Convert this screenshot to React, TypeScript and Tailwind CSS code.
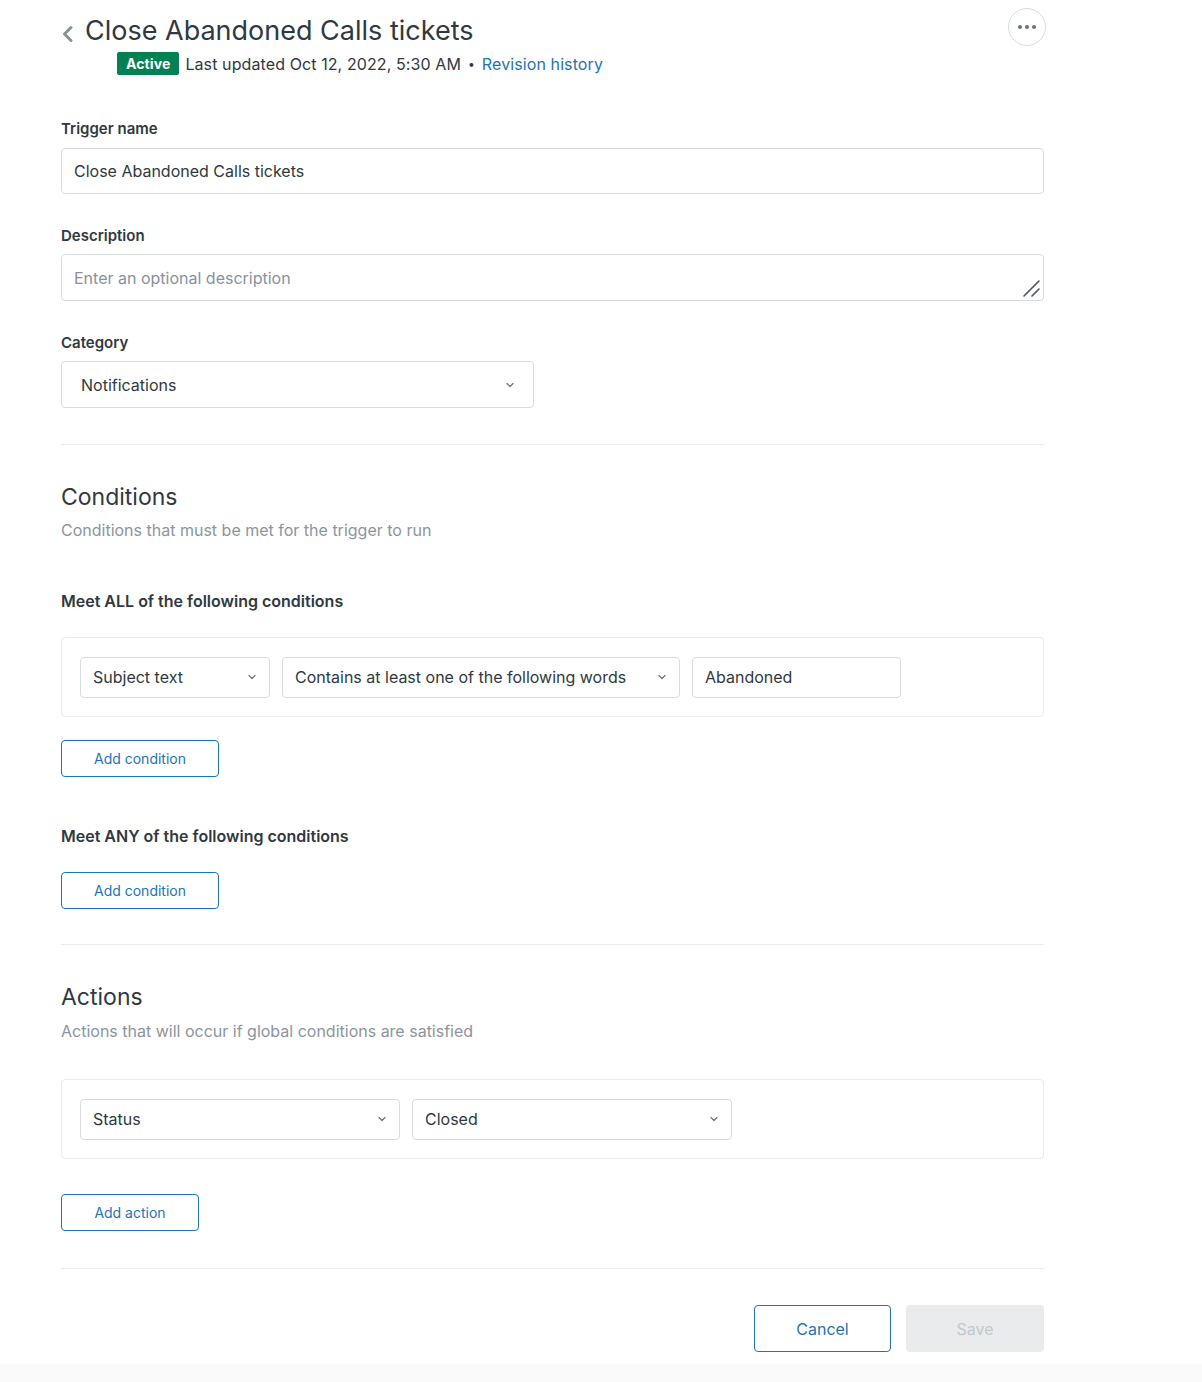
import React from 'react';

const font = { fontFamily: 'Inter, "Noto Sans", Arial, sans-serif' };

const Chevron: React.FC<{ className?: string }> = ({ className = '' }) => (
  <svg viewBox="0 0 12 12" className={`w-[12px] h-[12px] ${className}`} fill="none">
    <path d="M3 4.5 6 7.5 9 4.5" stroke="#68737d" strokeWidth="1.2" strokeLinecap="round" strokeLinejoin="round" />
  </svg>
);

const Select: React.FC<{ value: string; className?: string }> = ({ value, className = '' }) => (
  <div
    className={`h-[41px] flex items-center justify-between pl-[12px] pr-[11px] border border-[#d8dcde] rounded-[4px] bg-white text-[16px] text-[#2f3941] ${className}`}
  >
    <span>{value}</span>
    <Chevron />
  </div>
);

const OutlineButton: React.FC<{ label: string; className?: string }> = ({ label, className = '' }) => (
  <button
    className={`h-[37px] border border-[#1f73b7] rounded-[4px] text-[14px] text-[#1f73b7] bg-white ${className}`}
  >
    {label}
  </button>
);

const Label: React.FC<{ children: React.ReactNode; className?: string }> = ({ children, className = '' }) => (
  <div className={`text-[15px] leading-[20px] font-semibold text-[#2f3941] ${className}`}>{children}</div>
);

export default function App() {
  return (
    <div className="min-h-screen bg-white flex flex-col" style={font}>
      <div className="pl-[61px] w-[1044px] pt-[8px]">
        {/* Header */}
        <div className="flex items-start justify-between">
          <div className="pt-[7px]">
            <div className="flex items-center">
              <svg viewBox="0 0 13 18" className="w-[13px] h-[18px] mt-[5px]" fill="none">
                <path d="M10 2.5 3.5 9l6.5 6.5" stroke="#87929d" strokeWidth="3" strokeLinecap="round" strokeLinejoin="round" />
              </svg>
              <h1 className="ml-[11px] text-[27px] leading-[32px] text-[#2f3941]">
                Close Abandoned Calls tickets
              </h1>
            </div>
            <div className="mt-[5px] pl-[56px] flex items-center h-[23px] text-[16px] tracking-[0.1px] text-[#2f3941]">
              <span className="h-[23px] px-[9px] flex items-center bg-[#038153] text-white text-[14px] font-bold rounded-[2px]">
                Active
              </span>
              <span className="ml-[6px]">Last updated Oct 12, 2022, 5:30 AM</span>
              <span className="mx-[7px] text-[12px]">•</span>
              <span className="text-[#1f73b7]">Revision history</span>
            </div>
          </div>
          <button className="w-[38px] h-[38px] rounded-full border border-[#d8dcde] flex items-center justify-center gap-[3px] mr-[-2px]">
            <span className="w-[4px] h-[4px] rounded-full bg-[#68737d]" />
            <span className="w-[4px] h-[4px] rounded-full bg-[#68737d]" />
            <span className="w-[4px] h-[4px] rounded-full bg-[#68737d]" />
          </button>
        </div>

        {/* Trigger name */}
        <Label className="mt-[44px]">Trigger name</Label>
        <div className="mt-[9px] h-[46px] border border-[#d8dcde] rounded-[4px] flex items-center px-[12px] text-[16px] text-[#2f3941]">
          Close Abandoned Calls tickets
        </div>

        {/* Description */}
        <Label className="mt-[32px]">Description</Label>
        <div className="relative mt-[8px] h-[47px] border border-[#d8dcde] rounded-[4px] flex items-center px-[12px] text-[16px] text-[#87929d]">
          Enter an optional description
          <svg viewBox="0 0 20 20" className="absolute right-[2px] bottom-[2px] w-[20px] h-[20px]" fill="none">
            <path d="M3 18 18 3M11 18l7-7" stroke="#49545c" strokeWidth="1.6" strokeLinecap="round" />
          </svg>
        </div>

        {/* Category */}
        <Label className="mt-[32px]">Category</Label>
        <div className="mt-[8px] w-[473px] h-[47px] border border-[#d8dcde] rounded-[4px] flex items-center justify-between pl-[19px] pr-[17px] text-[16px] text-[#2f3941]">
          <span>Notifications</span>
          <Chevron />
        </div>

        <div className="mt-[36px] h-px bg-[#e9ebed]" />

        {/* Conditions */}
        <h2 className="mt-[38px] text-[23px] leading-[28px] text-[#2f3941]">Conditions</h2>
        <p className="mt-[8px] text-[16px] leading-[22px] text-[#8c959d]">Conditions that must be met for the trigger to run</p>

        <div className="mt-[49px] text-[16px] leading-[22px] font-semibold text-[#2f3941]">Meet ALL of the following conditions</div>
        <div className="mt-[25px] h-[80px] border border-[#e9ebed] rounded-[4px] flex items-center gap-[12px] px-[18px]">
          <Select value="Subject text" className="w-[190px]" />
          <Select value="Contains at least one of the following words" className="w-[398px]" />
          <div className="w-[209px] h-[41px] border border-[#d8dcde] rounded-[4px] flex items-center px-[12px] text-[16px] text-[#2f3941]">
            Abandoned
          </div>
        </div>
        <OutlineButton label="Add condition" className="mt-[23px] w-[158px]" />

        <div className="mt-[48px] text-[16px] leading-[22px] font-semibold text-[#2f3941]">Meet ANY of the following conditions</div>
        <OutlineButton label="Add condition" className="mt-[25px] w-[158px]" />

        <div className="mt-[35px] h-px bg-[#e9ebed]" />

        {/* Actions */}
        <h2 className="mt-[38px] text-[23px] leading-[28px] text-[#2f3941]">Actions</h2>
        <p className="mt-[9px] text-[16px] leading-[22px] text-[#8c959d]">Actions that will occur if global conditions are satisfied</p>

        <div className="mt-[37px] h-[80px] border border-[#e9ebed] rounded-[4px] flex items-center gap-[12px] px-[18px]">
          <Select value="Status" className="w-[320px]" />
          <Select value="Closed" className="w-[320px]" />
        </div>
        <OutlineButton label="Add action" className="mt-[35px] w-[138px]" />

        <div className="mt-[37px] h-px bg-[#e9ebed]" />

        <div className="mt-[36px] flex justify-end gap-[15px]">
          <button className="w-[137px] h-[47px] border border-[#1f73b7] rounded-[4px] text-[16px] text-[#1f73b7] bg-white">
            Cancel
          </button>
          <button className="w-[138px] h-[47px] rounded-[4px] text-[16px] text-[#c2c8cc] bg-[#e9ebed]">Save</button>
        </div>
      </div>
      <div className="mt-[12px] flex-1 min-h-[17px] bg-[#fafafa]" />
    </div>
  );
}
